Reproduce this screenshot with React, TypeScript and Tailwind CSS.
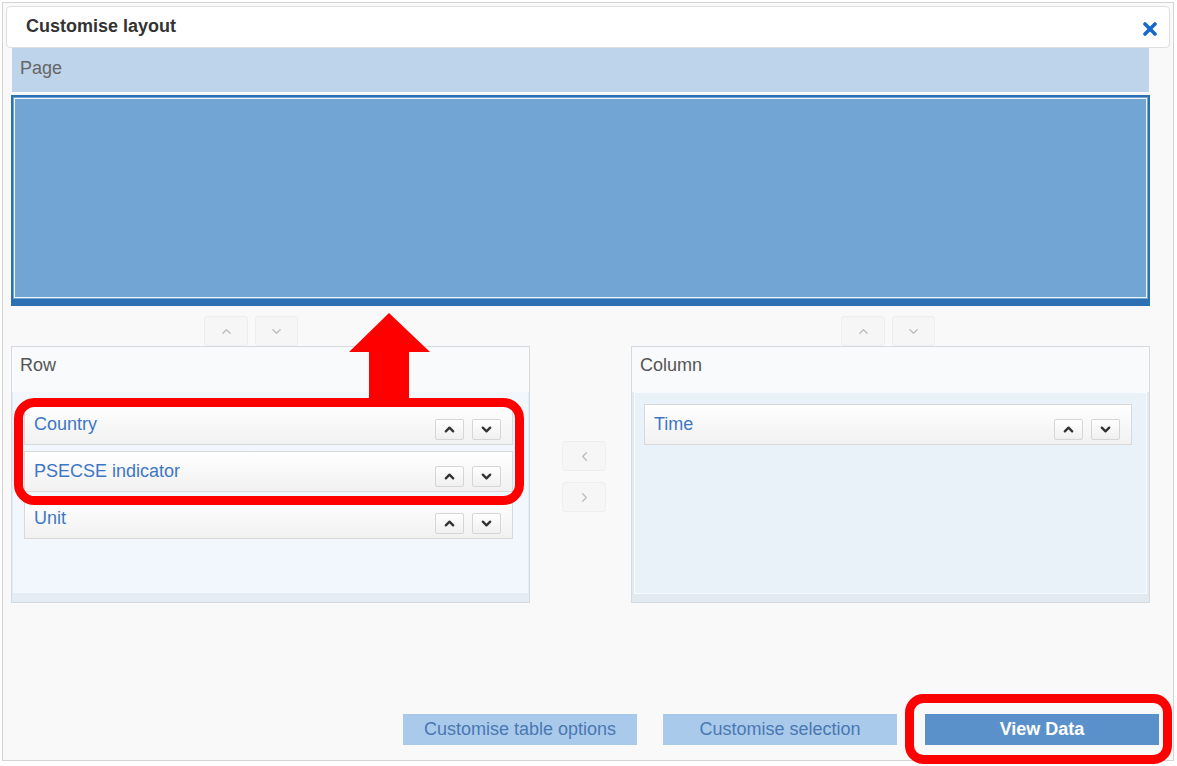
const font = "font-['Liberation_Sans',Arial,sans-serif]";

function Chevron({ dir, className }: { dir: 'up' | 'down' | 'left' | 'right'; className?: string }) {
  const pts = {
    up: '2,8 6,4 10,8',
    down: '2,4 6,8 10,4',
    left: '8,2 4,6 8,10',
    right: '4,2 8,6 4,10',
  }[dir];
  return (
    <svg viewBox="0 0 12 12" className={className} fill="none" stroke="currentColor" strokeLinecap="round" strokeLinejoin="round">
      <polyline points={pts} />
    </svg>
  );
}

function SmallBtn({ dir }: { dir: 'up' | 'down' }) {
  return (
    <button className="flex h-[21px] w-[29px] items-center justify-center rounded-[2px] border border-[#d6d6d6] bg-gradient-to-b from-white to-[#f0f0f0] text-[#333]">
      <Chevron dir={dir} className="h-[11px] w-[11px] stroke-[2.6]" />
    </button>
  );
}

function NavBtn({ dir, w = 'w-[44px]' }: { dir: 'up' | 'down' | 'left' | 'right'; w?: string }) {
  return (
    <button className={`flex h-[30px] ${w} items-center justify-center rounded-[3px] border border-[#eeeeee] bg-[#f6f6f6] text-[#bdbdbd]`}>
      <Chevron dir={dir} className="h-[11px] w-[11px] stroke-[1.5]" />
    </button>
  );
}

function Item({ label }: { label: string }) {
  return (
    <div className="mb-[6px] flex h-[41px] items-start justify-between border border-[#d9d9d9] bg-gradient-to-b from-white to-[#f1f1f1] pl-[9px] pr-[11px]">
      <span className="pt-[9px] text-[18px] leading-[20px] text-[#3d77c4]">{label}</span>
      <div className="flex gap-[8px] self-end pb-[4px]">
        <SmallBtn dir="up" />
        <SmallBtn dir="down" />
      </div>
    </div>
  );
}

export default function App() {
  return (
    <div className={`relative h-[766px] w-[1177px] overflow-hidden bg-white pl-[2px] pt-[2px] ${font}`}>
      <div className="flex h-[759px] w-[1172px] flex-col border border-[#d4d4d4] bg-[#f9f9f9]">
        {/* title bar */}
        <div className="mx-[3px] mt-[3px] flex h-[42px] items-center justify-between rounded-[4px] border border-[#dedede] bg-white pb-[2px] pl-[19px] pr-[12px]">
          <span className="text-[18px] font-bold text-[#333]">Customise layout</span>
          <svg viewBox="0 0 14 14" className="mt-[6px] h-[14px] w-[14px]" stroke="#1668cc" strokeWidth="3.6" strokeLinecap="round">
            <line x1="2" y1="2" x2="12" y2="12" />
            <line x1="12" y1="2" x2="2" y2="12" />
          </svg>
        </div>

        <div className="ml-[8px] mr-[23px] flex flex-col">
          {/* page */}
          <div className="mx-[1px] flex h-[44px] items-center bg-[#bed4ea] pb-[4px] pl-[8px] text-[18px] text-[#666]">Page</div>
          <div className="mt-[3px] h-[211px] border-2 border-b-[7px] border-[#2c6fb2] bg-[#73a5d4] p-[1px]">
            <div className="h-full border border-[#eef5fc]" />
          </div>

          <div className="grid grid-cols-[519px_101px_519px]">
            <div className="flex gap-[7px] pl-[193px] pt-[10px]">
              <NavBtn dir="up" />
              <NavBtn dir="down" w="w-[43px]" />
            </div>
            <div />
            <div className="flex gap-[7px] pl-[210px] pt-[10px]">
              <NavBtn dir="up" />
              <NavBtn dir="down" w="w-[43px]" />
            </div>

            {/* row panel */}
            <div className="flex h-[257px] flex-col border border-[#d5dae0] bg-[#e6ecf3]">
              <div className="h-[45px] bg-[#f8fafc] pl-[8px] pt-[8px] text-[18px] leading-[20px] text-[#555]">Row</div>
              <div className="mx-[1px] mb-[9px] flex-1 bg-[#f2f7fd] pl-[11px] pr-[15px] pt-[12px]">
                <Item label="Country" />
                <Item label="PSECSE indicator" />
                <Item label="Unit" />
              </div>
            </div>

            {/* middle */}
            <div className="flex flex-col gap-[11px] pl-[32px] pt-[95px]">
              <NavBtn dir="left" />
              <NavBtn dir="right" />
            </div>

            {/* column panel */}
            <div className="flex h-[257px] flex-col border border-[#d5dae0] bg-[#e3e9f0]">
              <div className="h-[45px] bg-[#f8fafc] pl-[8px] pt-[8px] text-[18px] leading-[20px] text-[#555]">Column</div>
              <div className="mx-[2px] mb-[8px] flex-1 border border-[#f7fbff] bg-[#e9f1f9] pl-[9px] pr-[14px] pt-[11px]">
                <Item label="Time" />
              </div>
            </div>
          </div>
        </div>

        {/* footer buttons */}
        <div className="mt-auto mb-[15px] mr-[14px] flex justify-end">
          <button className="h-[31px] w-[234px] bg-[#a9caeb] text-[18px] text-[#4a78b2]">Customise table options</button>
          <button className="ml-[26px] h-[31px] w-[234px] bg-[#a9caeb] text-[18px] text-[#4a78b2]">Customise selection</button>
          <button className="ml-[28px] h-[31px] w-[234px] bg-[#5a91cb] text-[18px] font-bold text-white">View Data</button>
        </div>
      </div>

      {/* red annotations */}
      <svg className="pointer-events-none absolute inset-0" width="1177" height="766" viewBox="0 0 1177 766">
        <rect x="18.5" y="402.5" width="501" height="98" rx="16" fill="none" stroke="#ff0000" strokeWidth="9" />
        <polygon points="389,313 430,352 409,352 409,400 369,400 369,352 349,352" fill="#ff0000" />
        <rect x="909.5" y="698.5" width="258" height="61" rx="14" fill="none" stroke="#ff0000" strokeWidth="9" />
      </svg>
    </div>
  );
}
